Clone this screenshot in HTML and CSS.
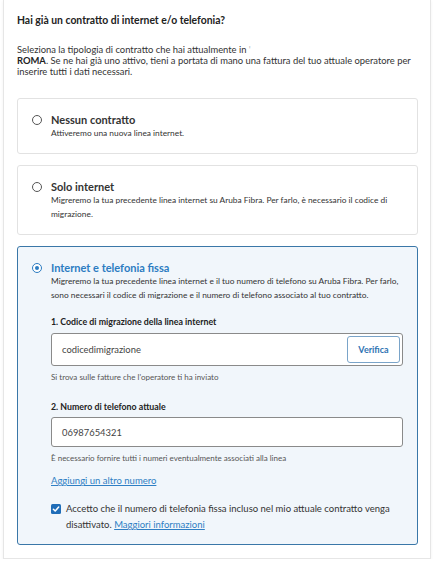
FILE: index.html
```html
<!DOCTYPE html>
<html lang="it">
<head>
<meta charset="utf-8">
<title>Contratto internet</title>
<link rel="stylesheet" href="styles.css">
</head>
<body>
<div class="panel">
  <h2 class="heading">Hai già un contratto di internet e/o telefonia?</h2>
  <p class="intro">Seleziona la tipologia di contratto che hai attualmente in <span class="redacted">'</span><br><strong>ROMA</strong>. Se ne hai già uno attivo, tieni a portata di mano una fattura del tuo attuale operatore per inserire tutti i dati necessari.</p>

  <div class="options">
    <div class="option">
      <span class="radio"></span>
      <div class="opt-body">
        <div class="opt-title">Nessun contratto</div>
        <div class="opt-desc">Attiveremo una nuova linea internet.</div>
      </div>
    </div>

    <div class="option">
      <span class="radio"></span>
      <div class="opt-body">
        <div class="opt-title">Solo internet</div>
        <div class="opt-desc">Migreremo la tua precedente linea internet su Aruba Fibra. Per farlo, è necessario il codice di migrazione.</div>
      </div>
    </div>

    <div class="option selected">
      <span class="radio checked"></span>
      <div class="opt-body">
        <div class="opt-title">Internet e telefonia fissa</div>
        <div class="opt-desc">Migreremo la tua precedente linea internet e il tuo numero di telefono su Aruba Fibra. Per farlo, sono necessari il codice di migrazione e il numero di telefono associato al tuo contratto.</div>

        <div class="field first">
          <div class="field-label">1. Codice di migrazione della linea internet</div>
          <div class="input with-btn">
            <span class="input-value">codicedimigrazione</span>
            <span class="btn">Verifica</span>
          </div>
          <div class="help">Si trova sulle fatture che l'operatore ti ha inviato</div>
        </div>

        <div class="field">
          <div class="field-label">2. Numero di telefono attuale</div>
          <div class="input">
            <span class="input-value">06987654321</span>
          </div>
          <div class="help">È necessario fornire tutti i numeri eventualmente associati alla linea</div>
        </div>

        <a class="add-link" href="#">Aggiungi un altro numero</a>

        <div class="consent">
          <span class="checkbox">
            <svg viewBox="0 0 10 10" width="10" height="10"><path d="M2.4 5.2 L4.2 7 L7.7 3.1" fill="none" stroke="#fff" stroke-width="1.5" stroke-linecap="round" stroke-linejoin="round"/></svg>
          </span>
          <div class="consent-text">Accetto che il numero di telefonia fissa incluso nel mio attuale contratto venga disattivato. <a href="#">Maggiori informazioni</a></div>
        </div>
      </div>
    </div>
  </div>
</div>
</body>
</html>
```

FILE: styles.css
```css
* { box-sizing: border-box; }

html, body {
  margin: 0;
  padding: 0;
  background: #ffffff;
}

body {
  font-family: Lato, "Open Sans", Arial, sans-serif;
  color: #333;
}

.panel {
  margin-left: 3px;
  width: 428px;
  border: 1px solid #e6e6e6;
  border-top: none;
  box-shadow: 0 1px 3px rgba(0, 0, 0, 0.06);
  padding: 13px 12px 13px 13px;
  background: #fff;
}

.heading {
  margin: 0;
  font-size: 10.4px;
  line-height: 14px;
  font-weight: 700;
  color: #222;
}

.intro {
  margin: 17px 0 0;
  font-size: 9.4px;
  line-height: 11.2px;
  color: #333;
}

.intro strong { font-weight: 700; color: #222; }

.redacted { color: #bbb; }

.options {
  margin-top: 20px;
  display: flex;
  flex-direction: column;
  gap: 11px;
}

.option {
  display: flex;
  align-items: flex-start;
  gap: 9px;
  border: 1px solid #e2e2e2;
  border-radius: 3px;
  background: #fff;
  padding: 14px 14px 13px 14px;
}

.option.selected {
  border: 1.5px solid #3a77a8;
  background: #f1f6fb;
  padding-bottom: 11px;
}

.radio {
  flex: 0 0 auto;
  width: 10px;
  height: 10px;
  margin-top: 2px;
  border: 1px solid #555;
  border-radius: 50%;
  background: #fff;
  position: relative;
}

.radio.checked {
  border-color: #2c7cc2;
}

.radio.checked::after {
  content: "";
  position: absolute;
  left: 2px;
  top: 2px;
  width: 4px;
  height: 4px;
  border-radius: 50%;
  background: #2c7cc2;
}

.opt-body {
  flex: 1 1 auto;
  min-width: 0;
}

.opt-title {
  font-size: 11px;
  line-height: 14px;
  font-weight: 700;
  color: #333;
}

.selected .opt-title {
  color: #2c7cc2;
}

.opt-desc {
  font-size: 8.35px;
  line-height: 13.5px;
  color: #333;
}

.field.first { margin-top: 14px; }
.field { margin-top: 18px; }

.field-label {
  font-size: 8.8px;
  line-height: 12px;
  font-weight: 700;
  color: #222;
  margin-bottom: 5px;
}

.field + .field .field-label {
  margin-bottom: 4px;
}

.input {
  display: flex;
  align-items: center;
  justify-content: space-between;
  height: 30px;
  border: 1px solid #8a8a8a;
  border-radius: 3px;
  background: #fff;
  padding: 0 2px 0 10px;
}

.input.with-btn {
  height: 33px;
}

.input-value {
  font-size: 9.4px;
  color: #444;
}

.btn {
  display: flex;
  align-items: center;
  justify-content: center;
  width: 53px;
  height: 27px;
  border: 1px solid #7aa4c9;
  border-radius: 3px;
  background: #fff;
  color: #2f74b3;
  font-size: 9px;
  font-weight: 700;
}

.help {
  margin-top: 5px;
  font-size: 8px;
  line-height: 12px;
  color: #555;
}

.add-link {
  display: block;
  margin-top: 11px;
  font-size: 9.5px;
  line-height: 12px;
  color: #2f7fc4;
  text-decoration: underline;
}

.consent {
  margin-top: 14px;
  display: flex;
  align-items: flex-start;
  gap: 5px;
}

.checkbox {
  flex: 0 0 auto;
  width: 10px;
  height: 10px;
  margin-top: 3px;
  border-radius: 1.5px;
  background: #1f6db8;
  display: flex;
  align-items: center;
  justify-content: center;
}

.checkbox svg { display: block; }

.consent-text {
  font-size: 9.5px;
  line-height: 16px;
  color: #333;
}

.consent-text a {
  color: #2f7fc4;
  text-decoration: underline;
}
```
